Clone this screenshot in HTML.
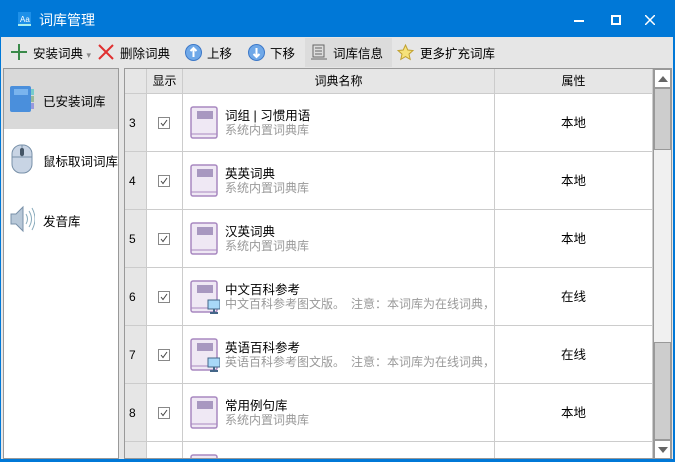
<!DOCTYPE html><html><head><meta charset="utf-8"><style>
*{margin:0;padding:0;box-sizing:border-box}
html,body{width:675px;height:462px;overflow:hidden}
body{background:#0078d7;font-family:"Liberation Sans","Noto Sans CJK SC",sans-serif;font-size:12px;color:#000;position:relative}
.a{position:absolute}
#main{left:1px;top:37px;width:672px;height:422px;background:#e6e6e6}
.title{left:39px;top:10px;color:#fff;font-size:14px}
.tb{top:43px;font-size:12.5px}
.cell{position:absolute;border-right:1px solid #ccc;border-bottom:1px solid #ccc}
.sub{color:#999;font-size:12px}
.chk{position:absolute;width:12px;height:12px;border:1px solid #888;background:#fff}
</style></head><body>
<svg class="a" style="left:18px;top:12px" width="14" height="15"><rect x="0" y="0" width="13" height="14" fill="#1e90e8"/><rect x="0" y="12" width="13" height="2" fill="#aee"/><text x="2" y="10" font-size="8" fill="#fff" font-family="Liberation Sans">Aa</text></svg>
<div class="a title">词库管理</div>
<div class="a" style="left:574px;top:20px;width:10px;height:2px;background:#fff"></div>
<div class="a" style="left:611px;top:15px;width:10px;height:10px;border:2px solid #fff"></div>
<svg class="a" style="left:645px;top:15px" width="10" height="10"><path d="M0 0L10 10M10 0L0 10" stroke="#fff" stroke-width="1.5"/></svg>
<div id="main" class="a"></div>
<!-- toolbar -->
<svg class="a" style="left:11px;top:44px" width="16" height="16"><path d="M8 0v16M0 8h16" stroke="#3a8a4a" stroke-width="2"/></svg>
<div class="a tb" style="left:33px">安装词典 <span style="color:#888;font-size:9px">▾</span></div>
<svg class="a" style="left:98px;top:44px" width="16" height="16"><path d="M1 1L15 15M15 1L1 15" stroke="#e03030" stroke-width="2"/></svg>
<div class="a tb" style="left:120px">删除词典</div>
<svg class="a" style="left:185px;top:44px" width="17" height="17"><circle cx="8.5" cy="8.5" r="8" fill="#6fa8e8" stroke="#3c78c8"/><path d="M8.5 4v9M5.5 7l3-3 3 3" stroke="#fff" stroke-width="2" fill="none"/></svg>
<div class="a tb" style="left:207px">上移</div>
<svg class="a" style="left:248px;top:44px" width="17" height="17"><circle cx="8.5" cy="8.5" r="8" fill="#6fa8e8" stroke="#3c78c8"/><path d="M8.5 4v9M5.5 10l3 3 3-3" stroke="#fff" stroke-width="2" fill="none"/></svg>
<div class="a tb" style="left:270px">下移</div>
<div class="a" style="left:305px;top:38px;width:87px;height:29px;background:#dcdcdc"></div>
<svg class="a" style="left:311px;top:44px" width="16" height="17"><rect x="2" y="1" width="11" height="12" fill="none" stroke="#666"/><path d="M4 4h7M4 7h7M4 10h7M0 15h16" stroke="#666"/></svg>
<div class="a tb" style="left:333px">词库信息</div>
<svg class="a" style="left:397px;top:44px" width="17" height="17"><path d="M8.5 1l2.3 5 5.2.5-4 3.6 1.2 5.3-4.7-2.8-4.7 2.8 1.2-5.3-4-3.6 5.2-.5z" fill="#f6e27a" stroke="#c0a030"/></svg>
<div class="a tb" style="left:420px">更多扩充词库</div>
<!-- left panel -->
<div class="a" style="left:3px;top:68px;width:116px;height:391px;background:#fff;border:1px solid #999"></div>
<div class="a" style="left:4px;top:69px;width:114px;height:60px;background:#d9d9d9"></div>
<svg class="a" style="left:9px;top:85px" width="26" height="28"><rect x="21" y="4" width="4" height="6" fill="#7cc"/><rect x="21" y="11" width="4" height="6" fill="#9b9"/><rect x="21" y="18" width="4" height="6" fill="#99d"/><rect x="1" y="1" width="21" height="26" rx="2" fill="#4a8fdc"/><rect x="5" y="4" width="14" height="6" fill="#7ab4ee"/></svg>
<div class="a" style="left:43px;top:91px;font-size:12.5px">已安装词库</div>
<svg class="a" style="left:11px;top:144px" width="22" height="30"><rect x="1" y="1" width="20" height="28" rx="9" fill="#c8d4e4" stroke="#7890a8"/><path d="M1 13h20M11 1v12" stroke="#7890a8"/><rect x="9" y="4" width="4" height="8" rx="2" fill="#456"/></svg>
<div class="a" style="left:43px;top:151px;font-size:12.5px">鼠标取词词库</div>
<svg class="a" style="left:9px;top:205px" width="26" height="28"><path d="M2 9h5l7-7v24l-7-7H2z" fill="#b8c8d8" stroke="#7890a8"/><path d="M17 9q3 5 0 10M20 6q5 8 0 16M23 3q6 11 0 22" stroke="#8ab" fill="none"/></svg>
<div class="a" style="left:43px;top:211px;font-size:12.5px">发音库</div>
<!-- grid -->
<div class="a" style="left:124px;top:68px;width:548px;height:391px;background:#fff;border:1px solid #999;overflow:hidden">
<div class="cell" style="left:0;top:0;width:22px;height:25px;background:#e6e6e6"></div>
<div class="cell" style="left:22px;top:0;width:36px;height:25px;background:#e6e6e6;text-align:center;line-height:25px">显示</div>
<div class="cell" style="left:58px;top:0;width:312px;height:25px;background:#e6e6e6;text-align:center;line-height:25px">词典名称</div>
<div class="cell" style="left:370px;top:0;width:158px;height:25px;background:#e6e6e6;text-align:center;line-height:25px">属性</div>
<div id="rows"></div>
<!-- scrollbar -->
<div class="a" style="left:528px;top:0;width:18px;height:390px;background:#f0f0f0;border-left:1px solid #999"></div>
<div class="a" style="left:529px;top:19px;width:17px;height:62px;background:#cdcdcd;border:1px solid #999"></div>
<div class="a" style="left:529px;top:273px;width:17px;height:98px;background:#cdcdcd;border:1px solid #999"></div>
<div class="a" style="left:529px;top:0;width:17px;height:19px;background:#fff;border:1px solid #999"><svg style="position:absolute;left:3px;top:6px" width="10" height="6"><path d="M0 6L5 0L10 6z" fill="#666"/></svg></div>
<div class="a" style="left:529px;top:371px;width:17px;height:19px;background:#fff;border:1px solid #999"><svg style="position:absolute;left:3px;top:6px" width="10" height="6"><path d="M0 0L5 6L10 0z" fill="#666"/></svg></div>
</div>
<script>
var d=[["3","词组 | 习惯用语","系统内置词典库","本地",0],["4","英英词典","系统内置词典库","本地",0],["5","汉英词典","系统内置词典库","本地",0],["6","中文百科参考","中文百科参考图文版。　注意：本词库为在线词典，","在线",1],["7","英语百科参考","英语百科参考图文版。　注意：本词库为在线词典，","在线",1],["8","常用例句库","系统内置词典库","本地",0],["","","","",0]];
var h="";d.forEach(function(r,i){var t=25+i*58;
h+='<div class="cell" style="left:0;top:'+t+'px;width:22px;height:58px;background:#e6e6e6;line-height:58px;padding-left:4px">'+r[0]+'</div>';
h+='<div class="cell" style="left:22px;top:'+t+'px;width:36px;height:58px"></div>';
if(r[0])h+='<div class="chk" style="left:33px;top:'+(t+23)+'px"><svg style="position:absolute;left:1px;top:1px" width="8" height="8"><path d="M1 4l2 2.5L7 1" stroke="#444" fill="none"/></svg></div>';
h+='<div class="cell" style="left:58px;top:'+t+'px;width:312px;height:58px;overflow:hidden"><svg style="position:absolute;left:7px;top:12px" width="30" height="34"><rect x="1" y="1" width="26" height="31" rx="2" fill="#efe8f4" stroke="#a888c0" stroke-width="1.5"/><path d="M1 28h26" stroke="#a888c0"/><rect x="7" y="5" width="16" height="8" fill="#a898c0"/>'+(r[4]?'<rect x="18" y="20" width="12" height="9" fill="#a8d8f8" stroke="#468"/><path d="M24 29v3M20 33h8" stroke="#468" stroke-width="2"/>':'')+'</svg><div style="position:absolute;left:42px;top:11px;font-size:12.5px;white-space:nowrap">'+r[1]+'</div><div class="sub" style="position:absolute;left:42px;top:27px;white-space:nowrap">'+r[2]+'</div></div>';
h+='<div class="cell" style="left:370px;top:'+t+'px;width:158px;height:58px;text-align:center;line-height:58px;font-size:12.5px">'+r[3]+'</div>';});
document.getElementById("rows").innerHTML=h;
</script>
</body></html>
